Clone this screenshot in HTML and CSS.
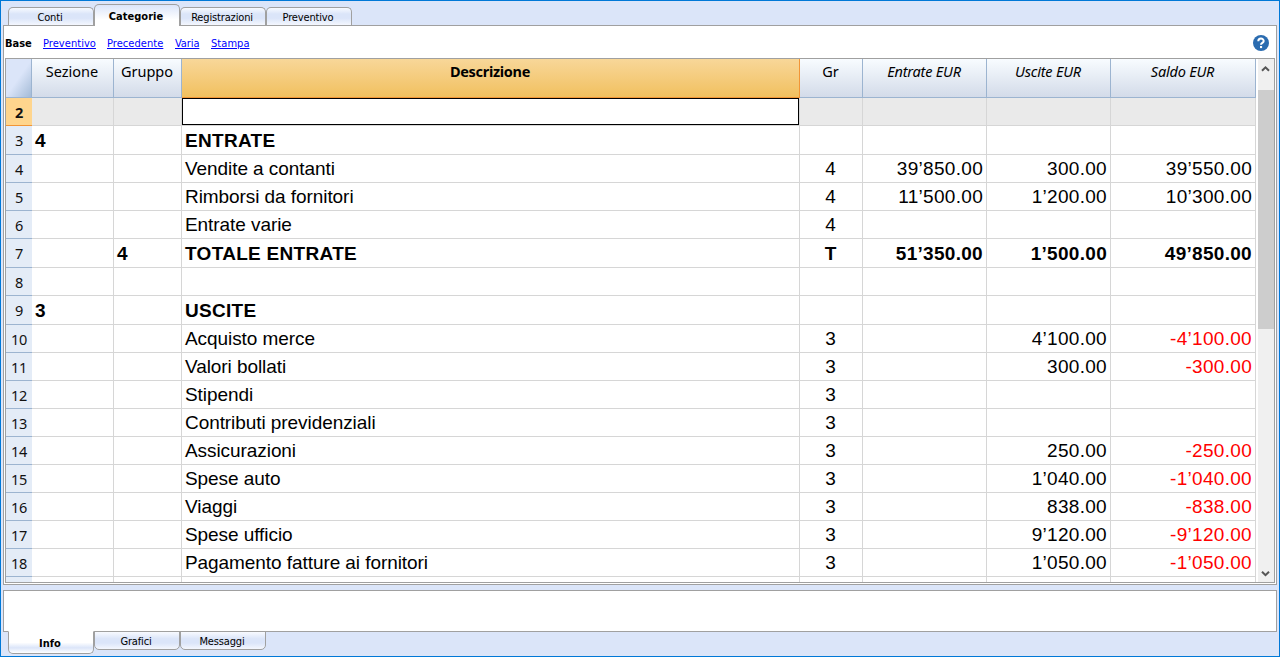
FILE: index.html
```html
<!DOCTYPE html>
<html lang="it">
<head>
<meta charset="utf-8">
<title>Categorie</title>
<link rel="stylesheet" href="styles.css">
</head>
<body>
<div class="window">
  <div class="tabs">
    <div class="tab"><span>Conti</span></div>
    <div class="tab active"><span>Categorie</span></div>
    <div class="tab"><span>Registrazioni</span></div>
    <div class="tab"><span>Preventivo</span></div>
  </div>
  <div class="panel">
    <div class="views">
      <b>Base</b><a class="l1">Preventivo</a><a class="l2">Precedente</a><a class="l3">Varia</a><a class="l4">Stampa</a>
      <svg class="help" width="16" height="16" viewBox="0 0 16 16"><circle cx="8" cy="8" r="8" fill="#2b6cb0"/><path d="M5.3 6.2C5.3 2.7 10.7 2.8 10.7 6C10.7 7.9 8 7.9 8 9.8" fill="none" stroke="#fff" stroke-width="2"/><rect x="7" y="11" width="2.1" height="2.1" fill="#fff"/></svg>
    </div>
    <div class="frame">
      <div class="grid" id="grid">
        <div class="row head"><div class="corner"></div><div>Sezione</div><div>Gruppo</div><div class="sel">Descrizione</div><div class="hgr">Gr</div><div class="amt">Entrate EUR</div><div class="amt">Uscite EUR</div><div class="amt">Saldo EUR</div></div>
      </div>
      <div class="scroll">
        <svg width="16" height="31" viewBox="0 0 16 31"><path d="M4 11.8L7.5 8.3L11 11.8" fill="none" stroke="#555" stroke-width="2"/></svg>
        <div class="thumb"></div>
        <svg class="down" width="16" height="17" viewBox="0 0 16 17"><path d="M4 6.7L7.5 10.2L11 6.7" fill="none" stroke="#555" stroke-width="2"/></svg>
      </div>
    </div>
  </div>
  <div class="info"></div>
  <div class="tabs bottom">
    <div class="tab active"><span>Info</span></div>
    <div class="tab"><span>Grafici</span></div>
    <div class="tab"><span>Messaggi</span></div>
  </div>
</div>
<script src="grid.js"></script>
</body>
</html>
```
FILE: styles.css
```css
* { box-sizing: border-box; }
body { margin: 0; }
.window { width: 1280px; height: 657px; border: 1px solid #0078d7; background: #dbe5f9; padding: 3px 2px 0; overflow: hidden; font: 11px "DejaVu Sans Condensed", "DejaVu Sans", sans-serif; font-stretch: condensed; color: #000; }
.tabs { display: flex; align-items: flex-end; height: 22px; padding-left: 5px; margin-bottom: -1px; position: relative; z-index: 1; }
.tab { width: 86px; height: 18px; margin-bottom: 1px; border: 1px solid #a0a0a0; border-bottom: 0; border-radius: 5px 5px 0 0; background: linear-gradient(#f8faff 0, #dbe5f9 35%, #dbe5f9 60%, #f4f7fe); text-align: center; line-height: 19px; letter-spacing: -.15px; padding-right: 2px; white-space: nowrap; }
.tab.active { height: 22px; margin-bottom: 0; background: linear-gradient(#dbe5f9, #fff 70%); font-weight: bold; line-height: 23px; letter-spacing: 0; }
.panel { width: 1274px; height: 560px; background: #fff; border: 1px solid #a0a0a0; padding: 0 1px 1px; }
.views { display: flex; align-items: center; height: 32px; padding-top: 2px; letter-spacing: .05px; }
.views a { color: #0000ff; text-decoration: underline; white-space: nowrap; }
.views b { width: 38px; letter-spacing: 0; }
.l1 { width: 64px; }
.l2 { width: 68px; }
.l3 { width: 36px; letter-spacing: -.1px; }
.help { margin-left: auto; margin-right: 6px; margin-bottom: 1px; }
.frame { display: flex; width: 1270px; height: 525px; border: 1px solid #a0a0a0; overflow: hidden; background: #fff; }
.grid { width: 1252px; height: 523px; overflow: hidden; }
.row { display: grid; grid-template-columns: 26px 82px 68px 618px 63px 124px 124px 145px; height: 28px; }
.row > div { border-right: 1px solid #d6d6d6; border-bottom: 1px solid #d6d6d6; font: 19px/27px "Liberation Sans", Arial, sans-serif; padding: 0 3px; white-space: nowrap; overflow: hidden; }
.row.bold { height: 29px; }
.row.bold > div { font-weight: bold; line-height: 29px; }
.row > .num { background: #e4ecf7; border-right: 0; border-bottom-color: #9cb4d0; font: 14.5px/28px "Noto Sans", sans-serif; text-align: center; padding: 0; letter-spacing: -.4px; color: #111; }
.row.bold > .num { font-weight: normal; line-height: 29px; }
.row > .gr { text-align: center; padding-right: 4px; }
.money { text-align: right; letter-spacing: .3px; }
.row > .desc { letter-spacing: -.07px; }
.row.bold > .desc { letter-spacing: .3px; }
.row > .neg { color: #f00; }
.row.head { height: 39px; }
.row.head > div { border-color: #9cb4d0; background: linear-gradient(#f8fcff, #d3dbe9); font: 14.5px/25px "Noto Sans", sans-serif; text-align: center; padding: 0 1px 0 0; letter-spacing: 0; }
.row.head > .sel { background: linear-gradient(#f8d799, #f1c05f); border-color: #f29536; font-weight: bold; letter-spacing: -.3px; }
.row.head > .corner { background: linear-gradient(125deg, #dbe5f9 50%, #a4bbd7); }
.row.head > .amt { font-style: italic; letter-spacing: -.2px; }
.row.current > div { background: #eaeaea; }
.row.current > .num { background: #ffd58d; border-bottom-color: #f29536; font-weight: bold; }
.row.current > .desc { background: #fff; box-shadow: inset 0 0 0 1px #000; }
.scroll { width: 16px; background: #f0f0f0; display: flex; flex-direction: column; }
.thumb { height: 239px; background: #cdcdcd; }
.down { margin-top: auto; }
.info { width: 1274px; height: 42px; margin-top: 5px; background: #fff; border: 1px solid #a0a0a0; }
.bottom { align-items: flex-start; margin: -1px 0 0; height: 24px; }
.bottom .tab { height: 19px; margin: 0; border: 1px solid #a0a0a0; border-radius: 0 0 5px 5px; background: linear-gradient(#f8faff 0, #dbe5f9 40%, #dbe5f9 65%, #f4f7fe); line-height: 19px; }
.bottom .tab.active { height: 23px; border-top-color: #fff; background: linear-gradient(#fff 50%, #dbe5f9 75%, #fff); line-height: 23px; }
```
FILE: grid.js
```javascript
const rows = [
  [2, "", "", "", "", "", "", ""],
  [3, "4", "", "ENTRATE", "", "", "", ""],
  [4, "", "", "Vendite a contanti", "4", "39’850.00", "300.00", "39’550.00"],
  [5, "", "", "Rimborsi da fornitori", "4", "11’500.00", "1’200.00", "10’300.00"],
  [6, "", "", "Entrate varie", "4", "", "", ""],
  [7, "", "4", "TOTALE ENTRATE", "T", "51’350.00", "1’500.00", "49’850.00"],
  [8, "", "", "", "", "", "", ""],
  [9, "3", "", "USCITE", "", "", "", ""],
  [10, "", "", "Acquisto merce", "3", "", "4’100.00", "-4’100.00"],
  [11, "", "", "Valori bollati", "3", "", "300.00", "-300.00"],
  [12, "", "", "Stipendi", "3", "", "", ""],
  [13, "", "", "Contributi previdenziali", "3", "", "", ""],
  [14, "", "", "Assicurazioni", "3", "", "250.00", "-250.00"],
  [15, "", "", "Spese auto", "3", "", "1’040.00", "-1’040.00"],
  [16, "", "", "Viaggi", "3", "", "838.00", "-838.00"],
  [17, "", "", "Spese ufficio", "3", "", "9’120.00", "-9’120.00"],
  [18, "", "", "Pagamento fatture ai fornitori", "3", "", "1’050.00", "-1’050.00"],
  ["", "", "", "", "", "", "", ""]
];
const classes = ["num", "", "", "desc", "gr", "money", "money", "money"];
const grid = document.getElementById("grid");
for (const data of rows) {
  const row = document.createElement("div");
  row.className = "row";
  if (data[0] === 2) row.classList.add("current");
  if ([3, 7, 9].includes(data[0])) row.classList.add("bold");
  data.forEach((text, i) => {
    const cell = document.createElement("div");
    cell.className = classes[i];
    if (i === 7 && text.startsWith("-")) cell.classList.add("neg");
    cell.textContent = text;
    row.append(cell);
  });
  grid.append(row);
}
```
